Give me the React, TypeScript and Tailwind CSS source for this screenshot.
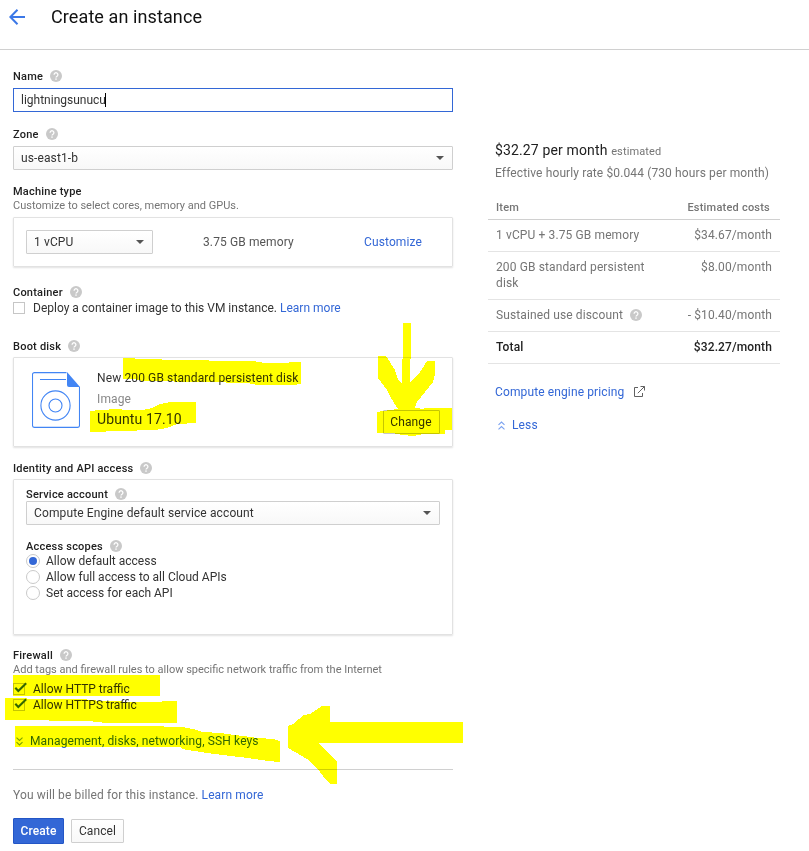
import React, { useState } from 'react';

const HelpIcon: React.FC<{ className?: string }> = ({ className = 'ml-[7px]' }) => (
    <svg className={`h-3 w-3 shrink-0 ${className}`} viewBox="0 0 12 12">
        <circle cx="6" cy="6" r="6" fill="#c9c9c9" />
        <path d="M4.1 4.7a1.9 1.9 0 1 1 2.9 1.6c-.6.4-1 .7-1 1.3" fill="none" stroke="#fff" strokeWidth="1.3" />
        <rect x="5.3" y="8.4" width="1.4" height="1.4" fill="#fff" />
    </svg>
);

const Label: React.FC<{ text: string; help?: boolean; className?: string }> = ({ text, help = true, className = '' }) => (
    <div className={`flex h-4 items-center text-[11px] font-medium tracking-[0.22px] text-[#212121] ${className}`}>
        <span className="mt-[2px]">{text}</span>
        {help && <HelpIcon />}
    </div>
);

const SelectBox: React.FC<{ value: string; className?: string }> = ({ value, className = '' }) => (
    <div className={`flex h-6 items-center justify-between rounded-[1px] border border-[#cfcfcf] bg-linear-to-b from-white to-[#f8f8f8] pl-[7px] pr-2 text-[#333] ${className}`}>
        <span>{value}</span>
        <svg className="h-1 w-2" viewBox="0 0 8 4">
            <path d="M0 0h8L4 4z" fill="#555" />
        </svg>
    </div>
);

const Chevrons: React.FC<{ up?: boolean; color: string }> = ({ up, color }) => (
    <svg className={`h-[9px] w-[7px] ${up ? 'rotate-180' : ''}`} viewBox="0 0 7 9" fill="none" stroke={color} strokeWidth="1.1">
        <path d="M.5.7l3 2.8 3-2.8M.5 5.2l3 2.8 3-2.8" />
    </svg>
);

const CheckRow: React.FC<{ text: string }> = ({ text }) => (
    <div className="flex h-4 items-center tracking-normal">
        <svg className="h-4 w-[15px] shrink-0" viewBox="0 0 15 16" fill="none">
            <rect x=".5" y="2.5" width="11" height="11" stroke="#c6c6c6" />
            <path d="M2.3 6.7l3 3.2 7.9-7.6" stroke="#3367d6" strokeWidth="2.1" />
        </svg>
        <span className="ml-[5px]">{text}</span>
    </div>
);

const DiskIcon: React.FC = () => (
    <svg className="h-14 w-12 shrink-0" viewBox="0 0 48 56" fill="none" stroke="#4285f4">
        <path d="M34.5.6H2.5a2 2 0 0 0-2 2v50.8a2 2 0 0 0 2 2h43a2 2 0 0 0 2-2V15" strokeWidth="1.1" />
        <path d="M8 7.5h26" />
        <path d="M35 0l13 15H37a2 2 0 0 1-2-2z" fill="#4285f4" stroke="none" />
        <circle cx="23.5" cy="33.5" r="14.6" strokeWidth="1.1" />
        <circle cx="23.5" cy="33.5" r="6.5" strokeWidth="1.1" />
    </svg>
);

// Marker strokes drawn over the form
const MARKS = [
    '123,358 135,358 135,359 188,360 230,361 252,361 266,363 289,363 289,362 301,362 301,384 297,384 297,385 258,385 247,383 205,382 143,381 133,379 123,379',
    '90,411 100,410 117,409 127,410 143,410 152,408 160,404 170,402 196,402 196,423 177,424 167,428 155,430 118,431 106,431 106,432 90,432',
    '403,323 411,323 411,359 410,359 410,382 418,375 424,366 427,361 435,361 435,374 433,382 425,392 417,402 415,408 424,409 424,408 452,408 452,430 445,430 445,434 423,434 414,436 402,435 392,433 377,433 377,412 383,411 390,410 398,409 391,398 387,390 378,378 378,356 386,356 395,370 398,379 402,384 402,359 403,359',
    '13,675 160,675 160,696 13,696',
    '5,698 27,698 27,699 83,699 100,701 143,702 162,702 162,701 177,701 177,723 110,723 93,722 93,721 5,720',
    '15,726 146,726 182,727 193,729 203,732 220,733 235,735 258,738 273,739 280,741 280,762 268,761 248,758 223,755 207,753 182,749 180,747 15,747',
    '288,726 293,724 304,715 310,714 322,706 330,706 330,722 463,722 463,743 319,743 337,762 337,784 330,784 323,776 318,769 307,759 295,752 288,748',
];

const Highlights: React.FC = () => (
    <svg className="pointer-events-none absolute left-0 top-0 h-[851px] w-[809px] mix-blend-multiply" viewBox="0 0 809 851" fill="#ff0" shapeRendering="crispEdges">
        {MARKS.map(points => (
            <polygon key={points} points={points} />
        ))}
    </svg>
);

const SCOPES = ['Allow default access', 'Allow full access to all Cloud APIs', 'Set access for each API'];

const COSTS = [
    { item: '1 vCPU + 3.75 GB memory', cost: '$34.67/month' },
    { item: '200 GB standard persistent disk', cost: '$8.00/month' },
    { item: 'Sustained use discount', cost: '- $10.40/month', help: true },
    { item: 'Total', cost: '$32.27/month', total: true },
];

const CARD = 'border border-[#e2e2e2] rounded-[1px] shadow-[0_1px_2px_rgba(0,0,0,0.12)]';

const App: React.FC = () => {
    const [scope, setScope] = useState(0);

    return (
        <div className="relative h-[851px] w-[809px] overflow-hidden bg-white font-[Roboto,sans-serif] text-[12px] leading-4 tracking-[0.12px] text-[#333]">
            <header className="flex h-[50px] items-start border-b border-[#d0d0d0] pl-[9px] pt-[5px]">
                <svg className="mt-1 h-4 w-4" viewBox="0 0 16 16" fill="none" stroke="#3b78e7" strokeWidth="2">
                    <path d="M16 8H1.5M8.5.8L1.4 8l7.1 7.2" />
                </svg>
                <h1 className="ml-[26px] text-[18px] leading-6 tracking-[0.1px] text-[#111]">Create an instance</h1>
            </header>

            <div className="flex">
                <main className="ml-[13px] w-[440px] pt-[18px]">
                    <Label text="Name" />
                    <div className="mt-1 flex h-6 items-center border border-[#3367d6] pl-[7px] tracking-normal">
                        <span>lightningsunucu</span>
                        <span className="-ml-px h-[14px] w-px bg-black" />
                    </div>

                    <Label text="Zone" className="mt-[14px]" />
                    <SelectBox value="us-east1-b" className="mt-1" />

                    <Label text="Machine type" help={false} className="mt-[13px]" />
                    <p className="h-[14px] text-[11px] leading-[13px] tracking-normal text-[#757575]">Customize to select cores, memory and GPUs.</p>
                    <div className={`mt-1 flex h-[50px] items-center pl-3 ${CARD}`}>
                        <SelectBox value="1 vCPU" className="w-[127px]" />
                        <span className="ml-[50px] w-[161px] text-[#555]">3.75 GB memory</span>
                        <a className="text-[#3367d6]">Customize</a>
                    </div>

                    <Label text="Container" className="mt-[17px]" />
                    <div className="flex h-4 items-center tracking-normal">
                        <span className="h-3 w-3 border border-[#c6c6c6]" />
                        <span className="ml-2">Deploy a container image to this VM instance.</span>
                        <a className="ml-[3px] text-[#3367d6]">Learn more</a>
                    </div>

                    <Label text="Boot disk" className="mt-[22px]" />
                    <div className={`mt-[3px] flex h-[90px] items-start pl-[18px] pt-[14px] ${CARD}`}>
                        <DiskIcon />
                        <div className="ml-[17px] w-[286px]">
                            <p className="-mt-[2px]">New 200 GB standard persistent disk</p>
                            <p className="mt-[5px] text-[#888]">Image</p>
                            <p className="mt-[2px] text-[14px] leading-5">Ubuntu 17.10</p>
                        </div>
                        <button className="mt-[38px] h-6 w-[57px] rounded-[1px] border border-[#c6c6c6] pr-px leading-[22px]">Change</button>
                    </div>

                    <Label text="Identity and API access" className="mt-[13px]" />
                    <div className={`mt-[3px] h-[156px] px-3 pt-[6px] ${CARD}`}>
                        <Label text="Service account" />
                        <SelectBox value="Compute Engine default service account" className="-mt-px" />
                        <Label text="Access scopes" className="mt-[13px]" />
                        <div className="-mt-px tracking-normal">
                            {SCOPES.map((s, i) => (
                                <div key={s} className="flex h-4 items-center" onClick={() => setScope(i)}>
                                    <span className="-my-1 flex h-[14px] w-[14px] items-center justify-center rounded-full border border-[#cacaca]">
                                        {scope === i && <span className="h-2 w-2 rounded-full bg-[#3367d6]" />}
                                    </span>
                                    <span className="ml-[6px]">{s}</span>
                                </div>
                            ))}
                        </div>
                    </div>

                    <Label text="Firewall" className="mt-3" />
                    <p className="h-[18px] text-[11px] leading-[13px] tracking-normal text-[#757575]">Add tags and firewall rules to allow specific network traffic from the Internet</p>
                    <CheckRow text="Allow HTTP traffic" />
                    <CheckRow text="Allow HTTPS traffic" />

                    <a className="mt-5 flex h-4 items-center pl-[3px] text-[#3367d6]">
                        <Chevrons color="#7ba2f0" />
                        <span className="ml-[7px]">Management, disks, networking, SSH keys</span>
                    </a>

                    <div className="mt-5 border-t border-[#d0d0d0]" />
                    <p className="mt-[17px] text-[#757575]">
                        You will be billed for this instance. <a className="text-[#3367d6]">Learn more</a>
                    </p>
                    <div className="mt-[15px] flex items-center">
                        <button className="h-[26px] w-[51px] rounded-[1px] border border-[#2356c6] bg-[#3367d6] font-medium text-white">Create</button>
                        <button className="ml-[7px] h-6 w-[53px] rounded-[1px] border border-[#cfcfcf] bg-linear-to-b from-white to-[#f8f8f8]">Cancel</button>
                    </div>
                </main>

                <aside className="ml-[35px] w-[292px] pt-[90px] text-[#757575]">
                    <p className="pl-[7px] text-[14px] leading-5 tracking-[0.14px] text-[#212121]">
                        $32.27 per month <span className="text-[11px] tracking-[0.12px] text-[#757575]">estimated</span>
                    </p>
                    <p className="mt-[3px] pl-[7px]">Effective hourly rate $0.044 (730 hours per month)</p>
                    <div className="mt-[18px] flex h-[21px] justify-between border-b border-[#d0d0d0] pl-2 pr-[10px] pt-px text-[11px] font-medium tracking-[0.22px]">
                        <span>Item</span>
                        <span>Estimated costs</span>
                    </div>
                    {COSTS.map(row => (
                        <div key={row.item} className={`flex justify-between border-b border-[#e4e4e4] px-2 pb-2 pt-[7px] ${row.total ? 'font-medium text-[#212121]' : ''}`}>
                            <span className="flex w-[160px] items-center">
                                {row.item}
                                {row.help && <HelpIcon />}
                            </span>
                            <span>{row.cost}</span>
                        </div>
                    ))}
                    <a className="mt-5 flex items-center pl-[7px] text-[#3367d6]">
                        <span>Compute engine pricing</span>
                        <svg className="-mt-[2px] ml-[10px] h-[11px] w-[11px]" viewBox="0 0 11 11" fill="none" stroke="#616161">
                            <path d="M4 1.5H.5v9h8V7M6.5.5h4v4M10.5.5L3.8 7.2" />
                        </svg>
                    </a>
                    <a className="mt-[17px] flex items-center pl-[10px] text-[#3367d6]">
                        <Chevrons up color="#7ba2f0" />
                        <span className="ml-[7px]">Less</span>
                    </a>
                </aside>
            </div>
            <Highlights />
        </div>
    );
};

export default App;
